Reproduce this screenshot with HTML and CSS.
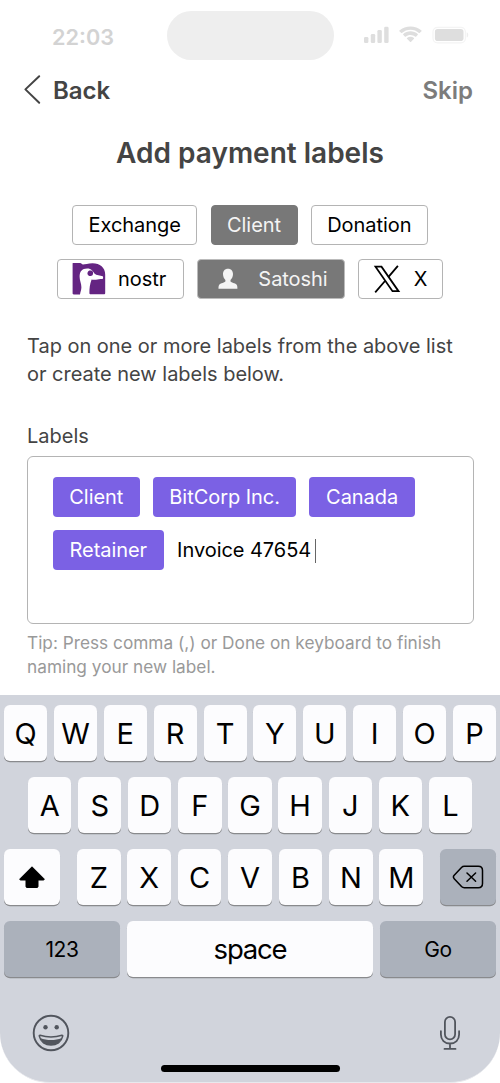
FILE: index.html
```html
<!DOCTYPE html>
<html lang="en">
<head>
<meta charset="utf-8">
<title>Add payment labels</title>
<link rel="stylesheet" href="styles.css">
</head>
<body>
<div class="screen">
  <div class="status">
    <span class="time">22:03</span>
    <span class="island"></span>
    <svg class="indicators" width="106" height="18" viewBox="0 0 106 18">
      <g fill="#dedede">
        <rect x="0" y="11" width="4.4" height="6" rx="1.3"/>
        <rect x="6.8" y="8" width="4.4" height="9" rx="1.3"/>
        <rect x="13.4" y="4" width="4.4" height="13" rx="1.3"/>
        <rect x="20.2" y="0.8" width="4.4" height="16.2" rx="1.3"/>
        <path d="M46.5 3.8c3.2 0 6.200 1.200 8.500 3.300.2.200.4.200.6 0l1.900-1.900c.2-.2.200-.5 0-.7C51.400-.9 41.600-.9 35.400 4.500c-.2.200-.2.500 0 .7l1.900 1.900c.2.200.5.200.6 0 2.400-2.100 5.400-3.300 8.600-3.300z"/>
        <path d="M46.500 8.900c1.800 0 3.500.7 4.800 1.800.2.200.5.200.7 0l1.800-1.900c.2-.2.200-.5 0-.7-4.200-3.800-10.500-3.800-14.600 0-.2.200-.2.500 0 .7l1.800 1.900c.2.200.5.200.7 0 1.300-1.200 3-1.800 4.800-1.800z"/>
        <path d="M50 12.700c.2-.2.200-.500 0-.7-2-1.700-5-1.700-7 0-.2.200-.2.500 0 .7l3.200 3.200c.2.200.5.200.7 0z"/>
        <rect x="70.900" y="3" width="28.600" height="12" rx="2.800"/>
        <path d="M102.700 6.200v5.400c2.100-.9 2.100-4.500 0-5.400z" fill="#eee"/>
      </g>
      <rect x="69" y="1.300" width="32.400" height="15.500" rx="4.500" fill="none" stroke="#f4f4f4" stroke-width="1.200"/>
    </svg>
  </div>

  <header class="nav">
    <svg width="18" height="32" viewBox="0 0 18 32" fill="none" stroke="#444" stroke-width="2" stroke-linecap="round" stroke-linejoin="round"><path d="M16.200 2.200 2.400 15.400l13.800 13.400"/></svg>
    <span class="back">Back</span>
    <span class="skip">Skip</span>
  </header>

  <h1 class="title">Add payment labels</h1>

  <div class="choices">
    <div class="choice-row">
      <span class="chip exchange">Exchange</span>
      <span class="chip selected client">Client</span>
      <span class="chip donation">Donation</span>
    </div>
    <div class="choice-row">
      <span class="chip nostr">
        <svg width="34" height="32" viewBox="0 0 34 32">
          <path fill="#642482" d="M.8 0H8c1.600 0 1.800 1.500 3 1.500C13 1.500 16 .2 20.500.2 28 .2 33.200 4.500 33.200 11.500V30c0 .9-.4 1.300-1.300 1.300H18.800c-1.100 0-1.400-.5-1.400-1.300 0-4.600.4-8.800 2.200-13.400 1.200.3 2.700.3 4.400.1 2-.3 3.700-.8 6.500-.8.8-.2.800-2.300.2-2.700-2.400-.9-6.300-.7-8.300-2.700-1.600-2.200-2.700-4.900-7.300-4.900-5.100 0-7.500 3.100-7.500 8.200 0 4 1.800 6.500 1.800 10.500 0 2.700-1.100 5.100-1.400 7.100H1.800C.9 31.400.6 31 .6 30V1C.6.400.7 0 .8 0z"/>
          <path fill="#642482" d="M15.600 9.400c.8-2 2.200-2.100 3-1.800.9.300 1.200-.2 2.100.8.800 1.200.5 3.800-1.200 4.400-2 .6-3.500-.4-3.900-1.600-.2-.6-.3-1.200 0-1.800z"/>
        </svg>
        <span>nostr</span>
      </span>
      <span class="chip selected satoshi">
        <svg width="20" height="22" viewBox="0 0 20 22"><path fill="#f4f4f4" d="M10 .8c3.200 0 5 2.200 5 5.300 0 2.400-1 4.700-2.500 6v1.500c1 1.300 4.500 1.600 6 3 .9 1 .9 2.900.9 4.200H.5c0-1.300 0-3.200.9-4.200 1.500-1.400 5-1.700 6-3v-1.500C6 10.800 5 8.500 5 6.100 5 3 6.800.8 10 .8z"/></svg>
        <span>Satoshi</span>
      </span>
      <span class="chip xcorp">
        <svg width="28" height="28" viewBox="0 0 28 28" fill="none" stroke="#000"><path stroke-width="1.800" d="M2.500 1.700h6l17 24.500h-6z"/><path stroke-width="1.800" d="M24.900.8 15.300 12.100M12 16 2.200 27.300"/></svg>
        <span>X</span>
      </span>
    </div>
  </div>

  <p class="intro">Tap on one or more labels from the above list<br>or create new labels below.</p>

  <div class="field-name">Labels</div>
  <div class="field">
    <div class="field-row">
      <span class="tag t-client">Client</span>
      <span class="tag t-bit">BitCorp Inc.</span>
      <span class="tag t-canada">Canada</span>
    </div>
    <div class="field-row">
      <span class="tag t-retainer">Retainer</span>
      <span class="entry">Invoice 47654</span><span class="caret"></span>
    </div>
  </div>
  <p class="tip">Tip: Press comma (,) or Done on keyboard to finish<br>naming your new label.</p>

  <div class="keyboard">
    <div class="keys"><span class="key">Q</span><span class="key">W</span><span class="key">E</span><span class="key">R</span><span class="key">T</span><span class="key">Y</span><span class="key">U</span><span class="key">I</span><span class="key">O</span><span class="key">P</span></div>
    <div class="keys middle"><span class="key">A</span><span class="key">S</span><span class="key">D</span><span class="key">F</span><span class="key">G</span><span class="key">H</span><span class="key">J</span><span class="key">K</span><span class="key">L</span></div>
    <div class="keys lower">
      <span class="key wide"><svg width="26" height="22" viewBox="0 0 26 22"><path stroke="#000" stroke-linejoin="round" d="M13 .8 25 12.800c.4.500.2 1.200-.500 1.200H19v6.500c0 .6-.4 1-1 1H8c-.6 0-1-.4-1-1V14H1.500c-.7 0-.9-.7-.5-1.200z"/></svg></span>
      <span class="letters"><span class="key">Z</span><span class="key">X</span><span class="key">C</span><span class="key">V</span><span class="key">B</span><span class="key">N</span><span class="key">M</span></span>
      <span class="key wide dark"><svg width="32" height="24" viewBox="0 0 32 24" fill="none" stroke="#000" stroke-width="1.500" stroke-linecap="round" stroke-linejoin="round"><path d="M12.300 1.300h14c2.800 0 4.200 1.400 4.200 4.200v13c0 2.800-1.400 4.200-4.200 4.200h-14c-1.200 0-2-.4-2.800-1.200L2.200 13.700c-1.100-1.200-1.100-2.200 0-3.400l7.300-7.800c.8-.8 1.600-1.200 2.800-1.200z"/><path d="m15 8 8.600 8.300m0-8.300L15 16.300"/></svg></span>
    </div>
    <div class="keys bottom"><span class="key dark side">123</span><span class="key space">space</span><span class="key dark side">Go</span></div>
    <div class="tools">
      <svg width="38" height="38" viewBox="0 0 38 38" fill="none" stroke="#51555d"><circle cx="19" cy="19" r="17.300" stroke-width="1.900"/><circle cx="13.500" cy="13.200" r="2.200" fill="#51555d" stroke="none"/><circle cx="24.700" cy="13.200" r="2.200" fill="#51555d" stroke="none"/><path stroke-width="1.500" d="M8 21.200c7 2.200 15 2.200 22 0 .6 0 .8.400.7 1C29.500 28 24.500 31 19 31S8.500 28 7.300 22.200c-.1-.6.100-1 .7-1z"/><path fill="#51555d" stroke="none" d="M8.300 24c6.500 2.700 15 2.700 21.400 0C28 29 24 31 19 31S10 29 8.300 24z"/></svg>
      <svg width="22" height="36" viewBox="0 0 22 36" fill="none" stroke="#51555d" stroke-width="1.800" stroke-linecap="round"><rect x="5.900" y="1.900" width="10.200" height="22.500" rx="5.100"/><path d="M1.900 16.200v3.300c0 5.400 3.700 9 9.100 9s9.100-3.600 9.100-9v-3.300M11 28.500v5.400M5.500 33.900h11"/></svg>
    </div>
    <div class="home"></div>
  </div>
</div>
</body>
</html>
```

FILE: styles.css
```css
* { box-sizing: border-box; }
body { margin: 0; background: #fff; font-family: Inter, sans-serif; }
.screen { width: 500px; height: 1083px; display: flex; flex-direction: column; overflow: hidden; }
svg { display: block; flex: none; }
.status { height: 70px; padding: 10.500px 32px 0 52px; display: grid; grid-template-columns: 114.500px 166px 1fr; align-items: start; }
.time { margin-top: 12px; font-size: 21.700px; line-height: 28px; font-weight: 600; color: #d3d3d3; }
.island { width: 167px; height: 49.500px; border-radius: 25px; background: #eee; }
.indicators { margin: 15.500px 0 0 31.500px; }
.nav { height: 40px; display: flex; align-items: center; padding: 0 27px 0 23px; font-size: 24px; font-weight: 600; }
.back { margin-left: 12px; color: #444; }
.skip { margin-left: auto; color: #7c7c7c; }
.title { margin: 24px 0 0; height: 38px; font-size: 28px; line-height: 38px; font-weight: 600; text-align: center; color: #444; }
.choices { margin-top: 33.400px; display: flex; flex-direction: column; gap: 13.300px; }
.choice-row, .field-row { display: flex; gap: 13.300px; }
.choice-row { justify-content: center; }
.chip, .tag { height: 40px; border-radius: 4px; display: flex; align-items: center; justify-content: center; font-size: 20px; letter-spacing: -.05px; white-space: nowrap; }
.chip { border: 1px solid #b4b4b4; color: #000; }
.selected { background: #787878; color: #f4f4f4; }
.client { border-color: #787878; width: 87px; }
.exchange { width: 125px; }
.donation { width: 117px; }
.nostr { width: 127px; gap: 12px; padding-right: 2px; }
.satoshi { width: 148px; gap: 20px; padding-left: 4px; border-color: #bbb; }
.xcorp { width: 85px; gap: 12.500px; padding-right: 1px; }
.intro { margin: 33.600px 27px 0; font-size: 20px; line-height: 28px; letter-spacing: -.02px; color: #444; }
.field-name { margin: 33.700px 27px 0; font-size: 20px; line-height: 28px; color: #444; }
.field { margin: 6px 26px 0 26.500px; height: 168px; padding: 19.700px 25.300px; border: 1px solid #b4b4b4; border-radius: 6px; display: flex; flex-direction: column; gap: 13.300px; }
.tag { background: #7b61e4; color: #fff; }
.t-client { width: 87px; }
.t-bit { width: 143px; }
.t-canada { width: 105.500px; }
.t-retainer { width: 111px; }
.entry { font-size: 20px; line-height: 41px; letter-spacing: -.05px; color: #000; }
.caret { width: 1px; height: 24px; margin: 9px 0 0 -9.500px; background: #666; }
.tip { margin: 7.500px 26px 0 27px; font-size: 17.250px; line-height: 24px; color: #999; white-space: nowrap; }
.keyboard { margin-top: auto; height: 388.500px; padding: 10.700px 4px 0; border-radius: 0 0 50px 50px; background: #d1d4dc; color: #000; border-bottom: 1px solid #e8e9ed; }
.keys { display: flex; gap: 6.800px; height: 56px; margin-bottom: 16px; }
.key { flex: 1; height: 56px; border-radius: 6px; background: #fcfcfe; box-shadow: 0 1.300px 0 #898a8d; display: flex; align-items: center; justify-content: center; font-size: 29px; }
.middle { padding: 0 24px; }
.lower { justify-content: space-between; }
.letters { display: flex; width: 346px; gap: 6.800px; }
.wide { flex: none; width: 56px; }
.dark { background: #abb1bb; }
.side { flex: none; width: 116px; font-size: 21px; letter-spacing: -.4px; }
.space { font-size: 27.500px; letter-spacing: -1.200px; }
.tools { display: flex; justify-content: space-between; align-items: center; padding: 0 39px 0 32px; margin: 36.500px -4px 0; height: 38px; }
.home { width: 179px; height: 7px; margin: 13.200px auto 0; border-radius: 4px; background: #000; }
```
